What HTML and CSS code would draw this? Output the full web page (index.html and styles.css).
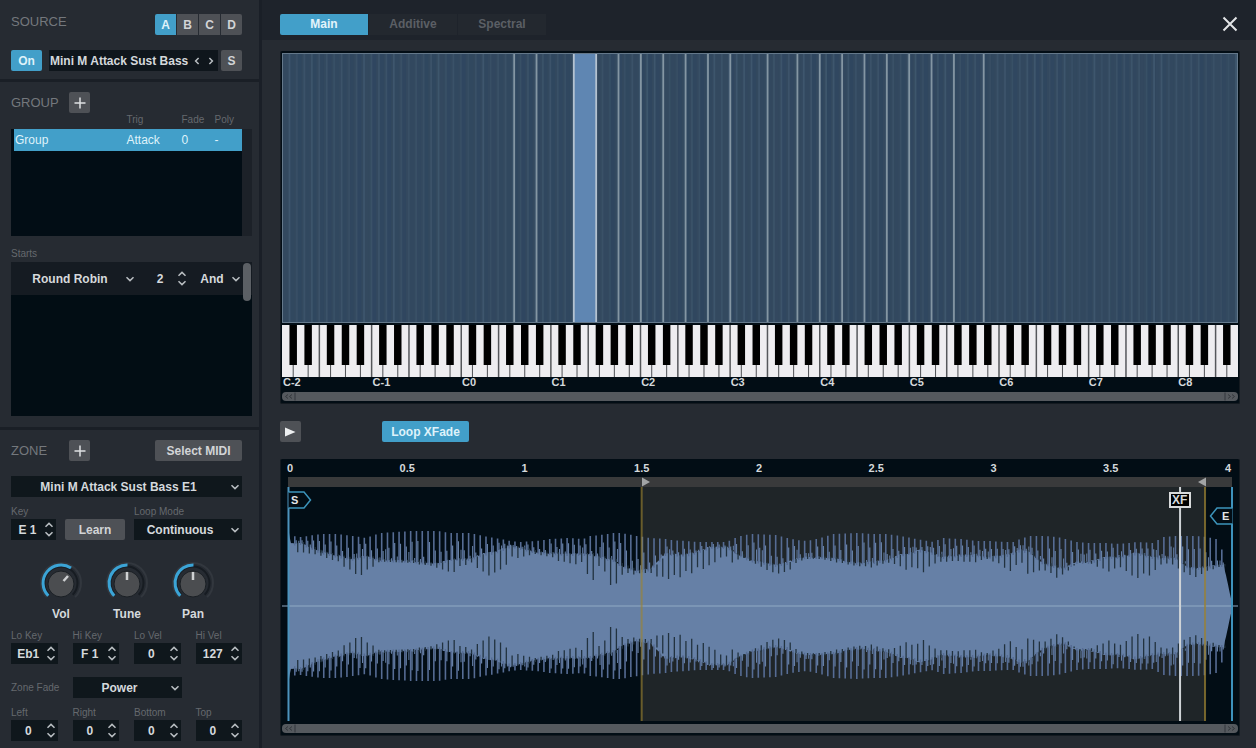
FILE: index.html
```html
<!DOCTYPE html>
<html lang="en">
<head>
<meta charset="utf-8">
<title>Sample Editor</title>
<link rel="stylesheet" href="styles.css">
</head>
<body>
<svg class="defs" aria-hidden="true">
  <symbol id="down" viewBox="0 0 10 6"><path d="M1.5 1.2 5 4.6 8.5 1.2"/></symbol>
  <symbol id="up" viewBox="0 0 10 6"><path d="M1.5 4.8 5 1.4 8.5 4.8"/></symbol>
  <symbol id="plus" viewBox="0 0 14 14"><path d="M7 1.5v11M1.5 7h11"/></symbol>
</svg>
<div class="app">
  <aside class="sidebar">
    <section class="section source">
      <div class="row between">
        <h2>SOURCE</h2>
        <div class="segments">
          <button class="btn on">A</button><button class="btn">B</button><button class="btn">C</button><button class="btn">D</button>
        </div>
      </div>
      <div class="row source-row">
        <button class="btn on wide">On</button>
        <div class="preset">
          <span>Mini M Attack Sust Bass</span>
          <button class="step" aria-label="Previous"><svg viewBox="0 0 6 10"><path d="M4.6 2 1.6 5l3 3"/></svg></button>
          <button class="step" aria-label="Next"><svg viewBox="0 0 6 10"><path d="M1.4 2l3 3-3 3"/></svg></button>
        </div>
        <button class="btn">S</button>
      </div>
    </section>

    <section class="section group">
      <div class="row">
        <h2 class="titled">GROUP</h2>
        <button class="btn" aria-label="Add group"><svg class="plus"><use href="#plus"/></svg></button>
      </div>
      <div class="list">
        <table>
          <thead><tr><th class="c-name"></th><th class="c-trig">Trig</th><th class="c-fade">Fade</th><th>Poly</th></tr></thead>
          <tbody><tr><td>Group</td><td>Attack</td><td>0</td><td>-</td></tr></tbody>
        </table>
        <div class="list-body"></div>
      </div>
      <div class="caption starts-label">Starts</div>
      <div class="starts">
        <div class="starts-row">
          <div class="select mode"><select aria-label="Start mode"><option>Round Robin</option></select><svg><use href="#down"/></svg></div>
          <div class="spin count"><input aria-label="Round robin count" value="2"><div class="arrows"><button aria-label="Up"><svg><use href="#up"/></svg></button><button aria-label="Down"><svg><use href="#down"/></svg></button></div></div>
          <div class="select logic"><select aria-label="Logic"><option>And</option></select><svg><use href="#down"/></svg></div>
        </div>
        <div class="thumb"></div>
      </div>
    </section>

    <section class="section zone">
      <div class="row">
        <h2 class="titled">ZONE</h2>
        <button class="btn" aria-label="Add zone"><svg class="plus"><use href="#plus"/></svg></button>
        <button class="btn midi">Select MIDI</button>
      </div>
      <div class="select zone-name"><select aria-label="Zone"><option>Mini M Attack Sust Bass E1</option></select><svg><use href="#down"/></svg></div>
      <div class="key-row">
        <label class="field"><span class="caption">Key</span>
          <span class="spin"><input value="E 1"><span class="arrows"><svg><use href="#up"/></svg><svg><use href="#down"/></svg></span></span></label>
        <button class="btn learn">Learn</button>
        <label class="field"><span class="caption">Loop Mode</span>
          <span class="select"><select><option>Continuous</option></select><svg><use href="#down"/></svg></span></label>
      </div>
      <div class="knobs">
        <div class="knob"><svg viewBox="0 0 44 44" role="img" aria-label="Vol"><path class="track" d="M7.900 37.100A20 20 0 1 1 36.100 37.100"/><path class="ring" d="M10.300 34.700A16.500 16.500 0 1 1 33.700 34.700"/><path class="value" d="M9.300 35.700A18 18 0 0 1 32 8"/><circle cx="22" cy="24" r="13"/><path class="tip" d="M24.500 21 29 16"/></svg><span>Vol</span></div>
        <div class="knob"><svg viewBox="0 0 44 44" role="img" aria-label="Tune"><path class="track" d="M7.900 37.100A20 20 0 1 1 36.100 37.100"/><path class="ring" d="M10.300 34.700A16.500 16.500 0 1 1 33.700 34.700"/><path class="value" d="M9.300 35.700A18 18 0 0 1 22.500 5"/><circle cx="22" cy="24" r="13"/><path class="tip" d="M22 20v-8"/></svg><span>Tune</span></div>
        <div class="knob"><svg viewBox="0 0 44 44" role="img" aria-label="Pan"><path class="track" d="M7.900 37.100A20 20 0 1 1 36.100 37.100"/><path class="ring" d="M10.300 34.700A16.500 16.500 0 1 1 33.700 34.700"/><path class="value" d="M9.300 35.700A18 18 0 0 1 22.500 5"/><circle cx="22" cy="24" r="13"/><path class="tip" d="M22 20v-8"/></svg><span>Pan</span></div>
      </div>
      <div class="quad">
        <label class="field"><span class="caption">Lo Key</span><span class="spin"><input value="Eb1"><span class="arrows"><svg><use href="#up"/></svg><svg><use href="#down"/></svg></span></span></label>
        <label class="field"><span class="caption">Hi Key</span><span class="spin"><input value="F 1"><span class="arrows"><svg><use href="#up"/></svg><svg><use href="#down"/></svg></span></span></label>
        <label class="field"><span class="caption">Lo Vel</span><span class="spin"><input value="0"><span class="arrows"><svg><use href="#up"/></svg><svg><use href="#down"/></svg></span></span></label>
        <label class="field"><span class="caption">Hi Vel</span><span class="spin"><input value="127"><span class="arrows"><svg><use href="#up"/></svg><svg><use href="#down"/></svg></span></span></label>
      </div>
      <label class="fade-row"><span class="caption">Zone Fade</span>
        <span class="select"><select><option>Power</option></select><svg><use href="#down"/></svg></span></label>
      <div class="quad">
        <label class="field"><span class="caption">Left</span><span class="spin"><input value="0"><span class="arrows"><svg><use href="#up"/></svg><svg><use href="#down"/></svg></span></span></label>
        <label class="field"><span class="caption">Right</span><span class="spin"><input value="0"><span class="arrows"><svg><use href="#up"/></svg><svg><use href="#down"/></svg></span></span></label>
        <label class="field"><span class="caption">Bottom</span><span class="spin"><input value="0"><span class="arrows"><svg><use href="#up"/></svg><svg><use href="#down"/></svg></span></span></label>
        <label class="field"><span class="caption">Top</span><span class="spin"><input value="0"><span class="arrows"><svg><use href="#up"/></svg><svg><use href="#down"/></svg></span></span></label>
      </div>
    </section>
  </aside>

  <main class="main">
    <header class="topbar">
      <nav class="tabs">
        <button class="tab active">Main</button><button class="tab">Additive</button><button class="tab">Spectral</button>
      </nav>
      <button class="close" aria-label="Close"><svg viewBox="0 0 16 16"><path d="M1.5 1.5l13 13M14.5 1.5l-13 13"/></svg></button>
    </header>

    <div class="content">
      <div class="panel mapping">
        <svg class="zones" id="zones" viewBox="0 0 128 270" preserveAspectRatio="none"></svg>
        <svg class="keys" id="keys" viewBox="0 0 128 52" preserveAspectRatio="none"></svg>
        <div class="octaves"><span>C-2</span><span>C-1</span><span>C0</span><span>C1</span><span>C2</span><span>C3</span><span>C4</span><span>C5</span><span>C6</span><span>C7</span><span>C8</span></div>
        <div class="scroll"><svg viewBox="0 0 14 8"><path d="M6 2 3.500 4 6 6M10 2 7.500 4l2.500 2M13 0v8"/></svg><svg viewBox="0 0 14 8"><path d="M1 0v8M4 2l2.500 2L4 6M8 2l2.500 2L8 6"/></svg></div>
      </div>

      <div class="transport">
        <button class="btn" aria-label="Play"><svg class="play" viewBox="0 0 12 12"><path d="M0 1.500 10.500 6 0 10.500Z"/></svg></button>
        <button class="btn on loop">Loop XFade</button>
      </div>

      <div class="panel sample">
        <div class="ruler"><span>0</span><span>0.5</span><span>1</span><span>1.5</span><span>2</span><span>2.5</span><span>3</span><span>3.5</span><span>4</span></div>
        <div class="loopbar">
          <svg class="loop-start" viewBox="0 0 8 10"><path d="M0 .5 8 5 0 9.500Z"/></svg>
          <svg class="loop-end" viewBox="0 0 8 10"><path d="M8 .5 0 5l8 4.500Z"/></svg>
        </div>
        <div class="plot">
          <svg class="wave" id="wave" viewBox="0 0 957 234" preserveAspectRatio="none"></svg>
          <svg class="flag flag-s" viewBox="0 0 24 18"><path d="M.5 1h15.500L22.500 9 16 17H.5"/><text x="3" y="13">S</text></svg>
          <span class="flag-xf">XF</span>
          <svg class="flag flag-e" viewBox="0 0 24 18"><path d="M23.500 1H8L1.500 9 8 17h15.500"/><text x="13" y="13">E</text></svg>
        </div>
        <div class="scroll"><svg viewBox="0 0 14 8"><path d="M6 2 3.500 4 6 6M10 2 7.500 4l2.500 2M13 0v8"/></svg><svg viewBox="0 0 14 8"><path d="M1 0v8M4 2l2.500 2L4 6M8 2l2.500 2L8 6"/></svg></div>
      </div>
    </div>
  </main>
</div>
<script src="draw.js"></script>
</body>
</html>
```
FILE: styles.css
```css
* { box-sizing: border-box; }
body {
  margin: 0;
  background: #262b32;
  color: #d5d9dc;
  font: bold 12px/14px "Liberation Sans", Arial, sans-serif;
}
button, input, select { font: inherit; color: inherit; border: 0; margin: 0; padding: 0; background: none; border-radius: 0; }
button { cursor: pointer; }
svg { display: block; fill: none; stroke: #b9bec2; stroke-width: 1.5; }
.defs { width: 0; height: 0; position: absolute; }
h2 { margin: 0; font-size: 13px; line-height: 16px; font-weight: normal; color: #74787d; }
.app { display: flex; min-height: 100vh; }

/* Sidebar */
.sidebar { flex: 0 0 262px; border-right: 3px solid #1a1f27; }
.section { padding: 0 17px 0 11px; border-bottom: 3px solid #1a1f26; }
.section:last-child { border-bottom: 0; }
.source { padding-top: 14px; padding-bottom: 8px; }
.group { padding-top: 10px; padding-bottom: 11px; }
.zone { padding-top: 10px; padding-bottom: 5px; }
.row { display: flex; align-items: center; }
.between { justify-content: space-between; align-items: flex-start; }
.titled { width: 58px; }
.segments { display: flex; gap: 1px; }
.btn { height: 21px; min-width: 21px; border-radius: 2px; background: #4e5156; color: #d2d4d6; display: flex; align-items: center; justify-content: center; }
.btn.on { background: #429fc9; color: #def2fa; }
.segments .btn { border-radius: 0; }
.segments .btn:first-child { border-radius: 2px 0 0 2px; }
.segments .btn:last-child { border-radius: 0 2px 2px 0; }
.source-row { margin-top: 15px; gap: 3px; }
.btn.wide { width: 31px; margin-right: 4px; }
.preset { flex: 1; height: 21px; background: #0f161c; display: flex; align-items: center; padding-left: 1px; white-space: nowrap; }
.preset span { flex: 1; }
.step { width: 14px; height: 21px; display: grid; place-items: center; }
.step svg { width: 6px; height: 10px; }
.plus { width: 14px; height: 14px; stroke: #dfe1e3; }
.caption { font-size: 10px; line-height: 12px; font-weight: normal; color: #65696e; white-space: nowrap; }

.list { margin-right: -10px; background: linear-gradient(90deg, #020d15 231px, #1c2128 231px) 0 16px no-repeat; }
.list table { width: 231px; border-collapse: collapse; table-layout: fixed; }
.list th { height: 16px; padding: 0 0 2px; text-align: left; font-size: 10px; line-height: 12px; font-weight: normal; color: #65696e; }
.list td { height: 22px; padding: 0; background: #429fc9; color: #dff2fa; font-weight: normal; }
.list td:first-child { border-left: 3px solid #020d15; padding-left: 1px; }
.c-name { width: 114px; }
.c-trig { width: 55px; }
.c-fade { width: 33px; }
.list-body { height: 85px; }
.starts-label { margin-top: 12px; }
.starts { margin-right: -10px; margin-top: 2px; display: flex; height: 154px; background: linear-gradient(#151b22 33px, #020d14 33px); }
.starts-row { flex: 1; display: flex; height: 33px; align-items: center; }
.thumb { width: 8px; height: 38px; margin: 1px 1px 0 0; border-radius: 4px; background: #5c6065; }

.select { display: grid; grid-template-columns: minmax(0, 1fr) 12px; align-items: center; height: 21px; background: #0f171c; }
.select select { appearance: none; grid-area: 1 / 1 / 2 / 3; width: 100%; height: 21px; padding-right: 16px; text-align: center; text-align-last: center; }
.select svg { grid-area: 1 / 2; width: 10px; height: 6px; pointer-events: none; }
.spin { display: flex; height: 21px; background: #0f171c; align-items: center; }
.spin input { flex: 1; min-width: 0; width: 0; height: 21px; text-align: center; }
.arrows { width: 12px; display: flex; flex-direction: column; gap: 3px; }
.spin button { height: 6px; }
.spin svg { width: 10px; height: 6px; }
.starts .select, .starts .spin { background: none; }
.mode { width: 126px; padding-left: 8px; }
.count { width: 52px; padding-left: 6px; }
.logic { flex: 1; padding-left: 8px; }

.midi { margin-left: auto; width: 87px; }
.zone-name { margin-top: 15px; }
.field { display: flex; flex-direction: column; gap: 1px; }
.key-row { margin-top: 9px; display: grid; grid-template-columns: 45px 60px 1fr; gap: 9px; align-items: end; }
.knobs { display: flex; gap: 22px; padding: 20px 0 0 28px; }
.knob { width: 44px; display: flex; flex-direction: column; align-items: center; gap: 3px; }
.knob svg { width: 44px; height: 44px; overflow: visible; }
.knob circle { fill: #4b4d50; stroke: #1a1f24; stroke-width: 1; }
.track { stroke: #32373e; stroke-width: 2; }
.ring { stroke: #171c22; stroke-width: 2; }
.value { stroke: #3ba4d6; stroke-width: 3; }
.tip { stroke: #cfd1d3; stroke-width: 2.5; }
.quad { margin-top: 9px; display: grid; grid-template-columns: repeat(4, 1fr); gap: 15px; }
.fade-row { margin-top: 13px; display: grid; grid-template-columns: 62px 109px; align-items: center; }
.fade-row + .quad { margin-top: 9px; }

/* Main area */
.main { flex: 1; min-width: 0; }
.topbar { display: flex; justify-content: space-between; align-items: center; height: 40px; padding: 8px 18px 0; background: #1e232b; }
.tabs { display: flex; gap: 1px; }
.tab { width: 88px; height: 21px; background: #23282f; color: #5b5f65; }
.tab.active { background: #429fc9; color: #e2f4fb; border-radius: 2px 0 0 2px; }
.close svg { width: 16px; height: 16px; stroke: #e2e4e6; stroke-width: 2; }
.content { padding: 11px 16px 11px 18px; }
.panel { background: #020d15; padding: 2px 1px; border-radius: 2px; border: 1px solid #141a20; border-top-width: 0; }
.zones { width: 100%; height: 270px; border: 1px solid #64788a; background: #33495f; }
.keys { width: 100%; height: 52px; margin-top: 2px; }
.octaves { display: grid; grid-template-columns: repeat(10, minmax(0, 12fr)) minmax(0, 8fr); height: 15px; font-size: 11px; line-height: 11px; padding-left: 1px; }
.scroll { height: 9px; border-radius: 4px; background: #55595e; display: flex; justify-content: space-between; }
.scroll svg { width: 14px; height: 9px; stroke: #33373c; stroke-width: 1; }
.transport { display: flex; gap: 81px; margin: 17px 0; }
.play { width: 12px; height: 12px; fill: #eef0f1; stroke: none; }
.loop { width: 87px; }
.ruler { display: flex; justify-content: space-between; padding: 0 2px 0 0; height: 16px; line-height: 15px; font-size: 11px; }
.ruler span { width: 16px; display: flex; justify-content: center; }
.loopbar { position: relative; height: 10px; margin: 0 6px; background: #393a3b; }
.loopbar svg { position: absolute; top: 0; width: 8px; height: 10px; fill: #a2a4a5; stroke: none; }
.loop-start { left: 37.5%; }
.loop-end { right: 2.8%; }
.plot { position: relative; height: 234px; margin-bottom: 3px; }
.wave { width: 100%; height: 234px; stroke: none; }
.flag { position: absolute; width: 24px; height: 18px; fill: #020d15; stroke: #3c94bb; }
.flag text { fill: #e3e6e8; stroke: none; font-size: 11px; }
.flag-s { left: 6px; top: 4px; }
.flag-e { right: 5px; top: 20px; }
.flag-xf { position: absolute; left: 93.9%; top: 5px; width: 22px; height: 16px; margin-left: -11px; border: 2px solid #d8dadb; background: #000; text-align: center; line-height: 12px; }
```
FILE: draw.js
```js
const NS = 'http://www.w3.org/2000/svg';
function add(parent, name, attrs) {
  const el = document.createElementNS(NS, name);
  for (const k in attrs) el.setAttribute(k, attrs[k]);
  parent.appendChild(el);
  return el;
}
function rect(parent, x, y, width, height, fill) {
  return add(parent, 'rect', { x, y, width, height, fill, stroke: 'none' });
}
let seed = 7;
function rnd() {
  seed = (seed * 16807) % 2147483647;
  return seed / 2147483647;
}

// Key zones: one faint line per note, a bright one at each zone edge.
const zones = document.getElementById('zones');
for (let n = 0; n < 128; n++) {
  rect(zones, n, 0, 0.5, 270, 'rgba(40,66,98,' + (rnd() * 0.35).toFixed(2) + ')');
  rect(zones, n + 0.75, 0, 0.25, 270, 'rgba(100,130,155,' + (0.08 + rnd() * 0.16).toFixed(2) + ')');
}
rect(zones, 39, 0, 3, 270, '#5f86b2');
for (const n of [31, 34, 39, 42, 45, 48, 51, 54, 57, 60, 65, 69, 72, 75, 78, 81, 84, 87, 90, 94]) {
  rect(zones, n - 0.1, 0, 0.24, 270, n === 39 || n === 42 ? '#b4c2d0' : '#8496a3');
}

// Piano keyboard, 128 notes.
const keys = document.getElementById('keys');
rect(keys, 0, 0, 128, 52, '#eeedf0');
for (let n = 0; n < 128; n++) {
  const k = n % 12;
  if ((k === 0 || k === 5) && n) rect(keys, n - 0.1, 0, 0.2, 52, '#55575b');
  if ([1, 3, 6, 8, 10].includes(k)) {
    rect(keys, n + 0.43, 40, 0.14, 12, '#55575b');
    rect(keys, n, 0, 1, 40, '#000');
  }
}

// Waveform envelope: x, peak height, body height, notch height.
const env = [
  [6,80,78,78],[9,70,62,60],[18,69,63,50],[38,72,54,50],[55,72,50,44],[71,70,47,29],[83,68,50,31],[98,73,46,44],
  [128,75,45,43],[155,75,42,38],[168,73,47,32],[188,73,47,43],[201,70,52,29],[213,68,54,32],[228,65,60,45],
  [238,64,58,49],[253,65,54,51],[268,67,53,49],[285,68,52,40],[301,67,52,41],[308,70,52,20],[318,71,49,39],
  [331,73,46,15],[338,73,41,29],[355,70,35,32],[368,68,37,32],[383,67,52,26],[388,66,52,24],[403,65,51,31],
  [415,64,54,33],[428,64,59,39],[445,64,59,49],[450,67,56,39],[458,70,51,49],[468,72,46,44],[493,71,41,31],
  [505,68,43,33],[515,66,48,44],[525,65,49,47],[538,68,49,47],[551,72,48,43],[575,73,43,39],[591,72,44,38],
  [605,72,46,44],[618,70,51,38],[640,66,56,31],[651,64,53,41],[661,68,49,44],[678,67,51,44],[695,65,51,43],
  [706,65,49,47],[725,64,51,36],[731,64,53,33],[738,67,56,46],[748,70,54,24],[761,70,43,36],[776,69,39,24],
  [783,67,38,31],[795,64,44,43],[808,63,44,43],[825,63,49,31],[838,62,49,39],[855,64,53,21],[871,63,49,28],
  [881,69,48,43],[895,70,48,38],[906,70,39,27],[915,70,38,29],[925,69,39,34],[938,66,41,39],[943,42,41,39],
  [945,32,30,26],[948,18,17,15],[950,8,7,6],[951,0,0,0]
];
function at(x, col) {
  for (let i = 1; i < env.length; i++) {
    if (x <= env[i][0]) {
      const a = env[i - 1], b = env[i];
      return a[col] + (b[col] - a[col]) * (x - a[0]) / (b[0] - a[0]);
    }
  }
  return 0;
}
const wave = document.getElementById('wave');
const mid = 119;
function bars(list, fill) {
  let d = '';
  for (const [x, w, from, to] of list) {
    const h = (to - from).toFixed(1);
    d += `M${x.toFixed(1)} ${(mid - to).toFixed(1)}h${w}v${h}h-${w}z`;
    d += `M${x.toFixed(1)} ${(mid + from).toFixed(1)}h${w}v${h}h-${w}z`;
  }
  add(wave, 'path', { d, fill });
}
rect(wave, 360, 0, 564, 234, '#1f2528');
let upper = '', lower = '';
for (let x = 6; x <= 951; x++) {
  const h = at(x, 2) + rnd() * 2 - 1;
  upper += `L${x} ${(mid - Math.max(h, 0)).toFixed(1)}`;
  lower = `L${x} ${(mid + Math.max(h, 0)).toFixed(1)}` + lower;
}
add(wave, 'path', { d: 'M6 119' + upper + lower + 'Z', fill: '#6680a6' });
const peaks = [], mids = [], notches = [];
for (let x = 12; x < 940; x += 5.8) {
  const o = at(x, 1), b = at(x, 2), n = at(x + 3, 3);
  peaks.push([x, 1.6, b - 2, o]);
  mids.push([x + 1.6, 1.2, b - 2, b + (o - b) * (0.1 + rnd() * 0.6)]);
  if (rnd() > 0.55) mids.push([x + 4.3, 1, b - 2, b + (o - b) * rnd() * 0.5]);
  notches.push([x + 3.1, 1.3, n + (b - n) * rnd() * 0.3, b + 1]);
}
bars(peaks, '#566c94');
bars(mids, '#6680a6');
bars(notches, '#22323f');
rect(wave, 0, 118.5, 957, 1, '#8fa9c3');
rect(wave, 5.5, 0, 2, 234, '#4c93bd');
rect(wave, 359, 0, 2, 234, 'rgba(155,130,50,.65)');
rect(wave, 923, 0, 2, 234, 'rgba(155,130,50,.75)');
rect(wave, 898, 0, 2, 234, '#cfd3d6');
rect(wave, 950, 0, 2, 234, '#3e93bd');
```
